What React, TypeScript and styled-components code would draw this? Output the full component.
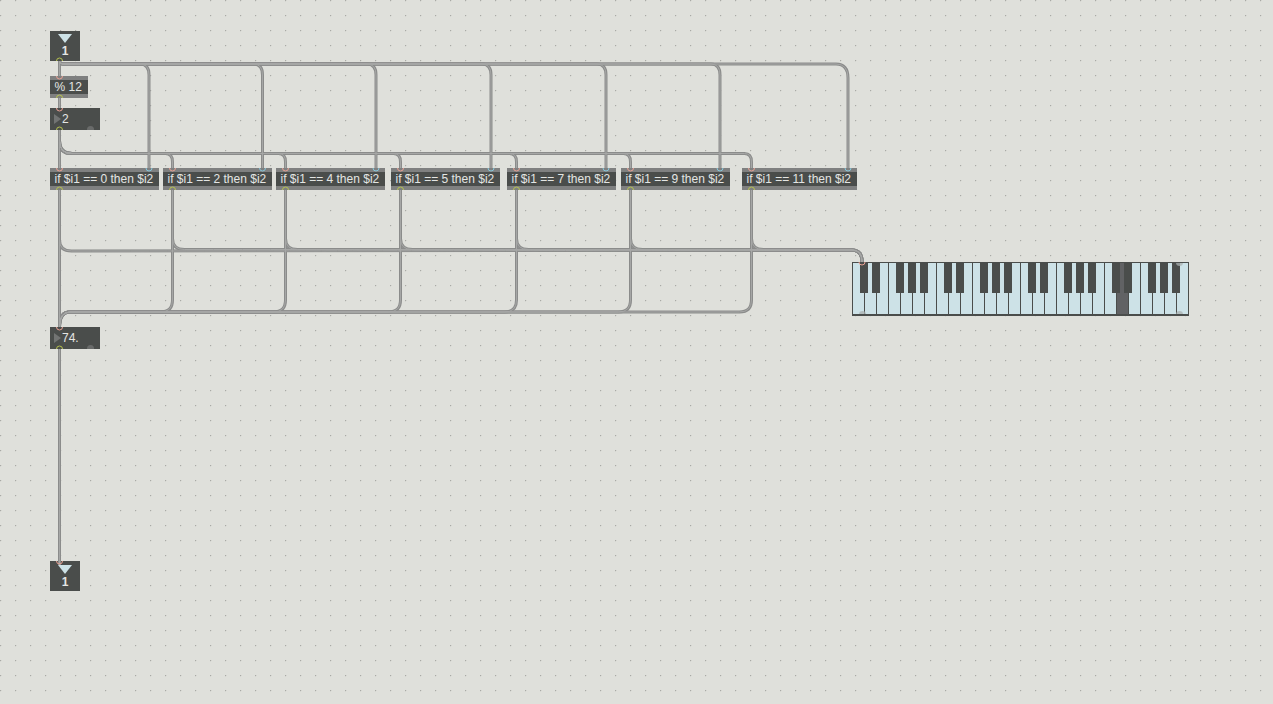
import React from 'react';
import styled, { createGlobalStyle } from 'styled-components';

const GlobalStyle = createGlobalStyle`
  html, body {
    margin: 0;
    padding: 0;
    background: #dfe0db;
    overflow: hidden;
  }
`;

const Patcher = styled.div`
  position: relative;
  width: 1273px;
  height: 704px;
  overflow: hidden;
  background-color: #dfe0db;
  background-image: radial-gradient(circle at 0.5px 0.5px, #a9aaa6 0.6px, transparent 1.1px);
  background-size: 15px 15px;
  background-position: 0 0;
  font-family: 'Liberation Sans', Arial, sans-serif;
  font-size: 12px;
  color: #e4e6e4;
`;

const Node = styled.div<{ $x: number; $y: number; $w: number; $h?: number }>`
  position: absolute;
  left: ${(p) => p.$x}px;
  top: ${(p) => p.$y}px;
  width: ${(p) => p.$w}px;
  height: ${(p) => p.$h ?? 22}px;
  box-sizing: border-box;
  background: #4a4d4b;
  overflow: hidden;
  display: flex;
  align-items: center;
`;

const ObjectBox = styled(Node)<{ $handle?: boolean }>`
  padding-left: 4.5px;
  border-top: 4px solid #7f8080;
  border-bottom: 4px solid #7f8080;
  white-space: nowrap;

  &::after {
    content: ${(p) => (p.$handle ? "''" : 'none')};
    position: absolute;
    right: 5px;
    top: -7px;
    width: 7px;
    height: 7px;
    border-radius: 50%;
    background: #a6a7a6;
  }
`;

const NumberBox = styled(Node)`
  padding-left: 12px;

  &::before {
    content: '';
    position: absolute;
    left: 4px;
    top: 6px;
    border-left: 7px solid #727473;
    border-top: 5.5px solid transparent;
    border-bottom: 5.5px solid transparent;
  }

  &::after {
    content: '';
    position: absolute;
    right: 6px;
    bottom: -3px;
    width: 7px;
    height: 7px;
    border-radius: 50%;
    background: #696b6a;
  }
`;

const PortBox = styled(Node)<{ $out?: boolean }>`
  justify-content: center;
  font-size: 12px;
  font-weight: bold;
  flex-direction: ${(p) => (p.$out ? 'column' : 'column-reverse')};
  padding: ${(p) => (p.$out ? '3px 0 2px' : '3px 0 3px')};
  align-items: center;
  gap: 1px;
`;

const Arrow = styled.span`
  width: 0;
  height: 0;
  border-left: 7.5px solid transparent;
  border-right: 7.5px solid transparent;
  border-top: 9px solid #cde2e7;
`;

const PortLabel = styled.span`
  line-height: 14px;
  height: 14px;
`;

const Keyboard = styled.div`
  position: absolute;
  left: 852px;
  top: 262px;
  width: 337px;
  height: 54px;
  box-sizing: border-box;
  display: flex;
  background: #4a4d4b;
  border-left: 1px solid #4a4d4b;
  border-top: 1px solid #4a4d4b;
  border-bottom: 2px solid #4a4d4b;
  overflow: hidden;
`;

const WhiteKey = styled.div<{ $active?: boolean }>`
  flex: 0 0 12px;
  box-sizing: border-box;
  background: ${(p) => (p.$active ? '#616264' : '#cde2e7')};
  border-right: 1px solid #4a4d4b;

  &:last-of-type {
    border-right-width: 2px;
  }
`;

const BlackKey = styled.div<{ $left: number }>`
  position: absolute;
  top: 0;
  left: ${(p) => p.$left}px;
  width: 8px;
  height: 30px;
  background: #4a4d4b;
`;

const KeyHandle = styled.div<{ $left: number; $bottom?: boolean }>`
  position: absolute;
  left: ${(p) => p.$left}px;
  ${(p) => (p.$bottom ? 'bottom: -4px;' : 'top: -4px;')}
  width: 7px;
  height: 7px;
  border-radius: 50%;
  background: rgba(170, 176, 176, 0.75);
`;

const CableLayer = styled.svg`
  position: absolute;
  left: 0;
  top: 0;
  pointer-events: none;
`;

const X0 = 59.5;
const TOP_BUS = [149, 262.5, 376, 491, 606, 720, 848];
const INLETS = [172.5, 285.5, 400.5, 516.5, 630.5, 751.5];
const OUTLETS = [X0, ...INLETS];

const cables: string[] = [
  `M${X0} 61V76`,
  `M${X0} 98V108`,
  `M${X0} 130V168`,
  `M${X0} 190V327`,
  `M${X0} 349V565`,
  ...TOP_BUS.map((x, i) => {
    const r = i === TOP_BUS.length - 1 ? 12 : 9;
    return `M${X0} 61Q${X0} 64 64 64H${x - r}Q${x} 64 ${x} ${64 + r + 2}V168`;
  }),
  ...INLETS.map(
    (x) => `M${X0} 130V141Q${X0} 153.5 72 153.5H${x - 7}Q${x} 153.5 ${x} 162V168`
  ),
  ...OUTLETS.map((x, i) => {
    const y = i === 0 ? 251 : 249.5;
    return `M${x} 190V${y - 11}Q${x} ${y} ${x + 12} ${y}C500 ${y} 700 250 852 250Q862 250 862 262`;
  }),
  ...INLETS.map(
    (x) => `M${x} 190V300Q${x} 312 ${x - 12} 312H70Q${X0} 312 ${X0} 327`
  ),
];

const IF_BOXES = [
  { x: 50, w: 109, label: 'if $i1 == 0 then $i2', inlet: X0 + 0, right: 149 },
  { x: 163, w: 109, label: 'if $i1 == 2 then $i2', inlet: 172.5, right: 262.5 },
  { x: 276, w: 109, label: 'if $i1 == 4 then $i2', inlet: 285.5, right: 376 },
  { x: 391, w: 109, label: 'if $i1 == 5 then $i2', inlet: 400.5, right: 491 },
  { x: 507, w: 109, label: 'if $i1 == 7 then $i2', inlet: 516.5, right: 606 },
  { x: 621, w: 109, label: 'if $i1 == 9 then $i2', inlet: 630.5, right: 720 },
  { x: 742, w: 115, label: 'if $i1 == 11 then $i2', inlet: 751.5, right: 848 },
];

const PINK = '#e8a093';
const GREEN = '#b6c24f';
const BLUE = '#86c6da';

// x, y, colour, opening upward for inlets, downward for outlets
const inletArc = (x: number, y: number) => `M${x - 3} ${y}A3 3 0 0 0 ${x + 3} ${y}`;
const outletArc = (x: number, y: number) => `M${x - 3} ${y}A3 3 0 0 1 ${x + 3} ${y}`;

const pinkPorts: string[] = [
  inletArc(X0, 76),
  inletArc(X0, 108),
  inletArc(X0, 327),
  inletArc(X0, 561),
  inletArc(862, 262),
  ...IF_BOXES.map((b) => inletArc(b.inlet, 168)),
];
const bluePorts = IF_BOXES.map((b) => inletArc(b.right, 168));
const greenPorts: string[] = [
  outletArc(X0, 61),
  outletArc(X0, 98),
  outletArc(X0, 130),
  outletArc(X0, 349),
  ...IF_BOXES.map((b) => outletArc(b.inlet, 190)),
];

const OCTAVE_BLACKS = [8, 20, 44, 56, 68];
const blackKeys = [0, 1, 2, 3].flatMap((o) =>
  OCTAVE_BLACKS.map((offset) => offset + o * 84 - 1)
);

export default function App() {
  return (
    <Patcher>
      <GlobalStyle />

      <PortBox $x={50} $y={31} $w={30} $h={30}>
        <PortLabel>1</PortLabel>
        <Arrow />
      </PortBox>
      <ObjectBox $x={50} $y={76} $w={38} $handle>
        % 12
      </ObjectBox>
      <NumberBox $x={50} $y={108} $w={50}>
        2
      </NumberBox>

      {IF_BOXES.map((b) => (
        <ObjectBox key={b.x} $x={b.x} $y={168} $w={b.w}>
          {b.label}
        </ObjectBox>
      ))}

      <Keyboard>
        {Array.from({ length: 28 }, (_, i) => (
          <WhiteKey key={i} $active={i === 22} />
        ))}
        {blackKeys.map((left) => (
          <BlackKey key={left} $left={left} />
        ))}
        <KeyHandle $left={6} $bottom />
        <KeyHandle $left={323} />
        <KeyHandle $left={323} $bottom />
      </Keyboard>

      <NumberBox $x={50} $y={327} $w={50}>
        74.
      </NumberBox>
      <PortBox $x={50} $y={561} $w={30} $h={30} $out>
        <Arrow />
        <PortLabel>1</PortLabel>
      </PortBox>

      <CableLayer width={1273} height={704} fill="none">
        {cables.map((d, i) => (
          <path key={`o${i}`} d={d} stroke="#8b8c8b" strokeWidth={3} />
        ))}
        {cables.map((d, i) => (
          <path key={`i${i}`} d={d} stroke="#a6a7a6" strokeWidth={1} />
        ))}
        {pinkPorts.map((d) => (
          <path key={d} d={d} stroke={PINK} strokeWidth={1} />
        ))}
        {bluePorts.map((d) => (
          <path key={d} d={d} stroke={BLUE} strokeWidth={1} />
        ))}
        {greenPorts.map((d) => (
          <path key={d} d={d} stroke={GREEN} strokeWidth={1} />
        ))}
      </CableLayer>
    </Patcher>
  );
}
